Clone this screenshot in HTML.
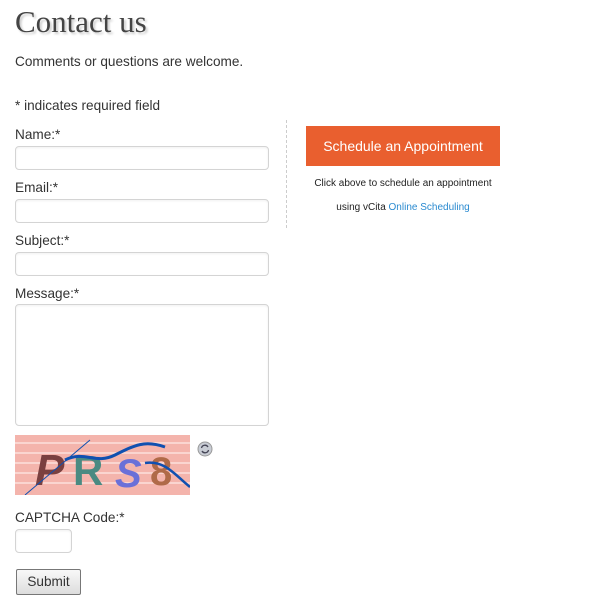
<!DOCTYPE html>
<html><head><style>
body{margin:0;width:590px;height:615px;background:#fff;position:relative;font-family:"Liberation Sans",sans-serif;color:#333;overflow:hidden}
.a{position:absolute;white-space:nowrap}
.t{font-size:13.6px}
input,textarea{position:absolute;border:1px solid #d4d4d4;border-radius:4px;background:#fff;box-shadow:inset 0 1px 2px rgba(0,0,0,.06);box-sizing:border-box;margin:0;padding:0}
</style></head><body>
<div class="a" style="left:15px;top:4px;font-family:'Liberation Serif',serif;font-size:31px;color:#444;text-shadow:2px 2px 2px #ccc">Contact us</div>
<div class="a t" style="left:15px;top:54px">Comments or questions are welcome.</div>
<div class="a t" style="left:15px;top:98px">* indicates required field</div>
<div class="a t" style="left:15px;top:127px">Name:*</div>
<input style="left:15px;top:146px;width:254px;height:24px">
<div class="a t" style="left:15px;top:180px">Email:*</div>
<input style="left:15px;top:199px;width:254px;height:24px">
<div class="a t" style="left:15px;top:233px">Subject:*</div>
<input style="left:15px;top:252px;width:254px;height:24px">
<div class="a t" style="left:15px;top:286px">Message:*</div>
<textarea style="left:15px;top:304px;width:254px;height:122px;resize:none"></textarea>
<svg class="a" style="left:15px;top:435px" width="175" height="60">
<rect width="175" height="60" fill="#f4b4ac"/>
<g stroke="#fbe0dc" stroke-width="1.5">
<path d="M0 8H175M0 18H175M0 28H175M0 38H175M0 48H175"/>
</g>
<text x="20" y="50" font-size="44" font-family="Liberation Sans" font-style="italic" font-weight="bold" fill="#7a4040">P</text>
<text x="58" y="50" font-size="42" font-family="Liberation Sans" font-weight="bold" fill="#4a8a82">R</text>
<text x="100" y="52" font-size="40" font-family="Liberation Sans" font-style="italic" font-weight="bold" fill="#6a70d8">S</text>
<text x="135" y="50" font-size="40" font-family="Liberation Sans" font-weight="bold" fill="#b06a48">8</text>
<path d="M50 25C70 15,80 30,100 20S130 5,150 12" stroke="#1050b0" stroke-width="3" fill="none"/>
<path d="M130 28C150 25,160 40,175 52" stroke="#1050b0" stroke-width="2.5" fill="none"/>
<path d="M10 60L75 5" stroke="#1050b0" stroke-width="1" fill="none"/>
</svg>
<svg class="a" style="left:197px;top:441px" width="16" height="16"><circle cx="8" cy="8" r="7" fill="#c8ccd4" stroke="#999"/><path d="M4.5 7a3.5 3.5 0 0 1 6.5-1M11.5 9a3.5 3.5 0 0 1-6.5 1" stroke="#445" stroke-width="1.3" fill="none"/></svg>
<div class="a t" style="left:15px;top:510px">CAPTCHA Code:*</div>
<input style="left:15px;top:529px;width:57px;height:24px">
<div class="a" style="left:16px;top:569px;width:65px;height:26px;box-sizing:border-box;border:1px solid #777;border-radius:2px;background:linear-gradient(#f8f8f8,#ddd);font-size:13.6px;text-align:center;line-height:24px">Submit</div>
<div class="a" style="left:286px;top:120px;height:108px;border-left:1px dashed #ccc"></div>
<div class="a" style="left:306px;top:126px;width:194px;height:40px;background:#e95f2f;color:#fff;font-size:14px;text-align:center;line-height:41px">Schedule an Appointment</div>
<div class="a" style="left:306px;top:178px;width:194px;text-align:center;font-size:10px;color:#222">Click above to schedule an appointment</div>
<div class="a" style="left:306px;top:202px;width:194px;text-align:center;font-size:10px;color:#222">using vCita <span style="color:#2a8ad0">Online Scheduling</span></div>
</body></html>
